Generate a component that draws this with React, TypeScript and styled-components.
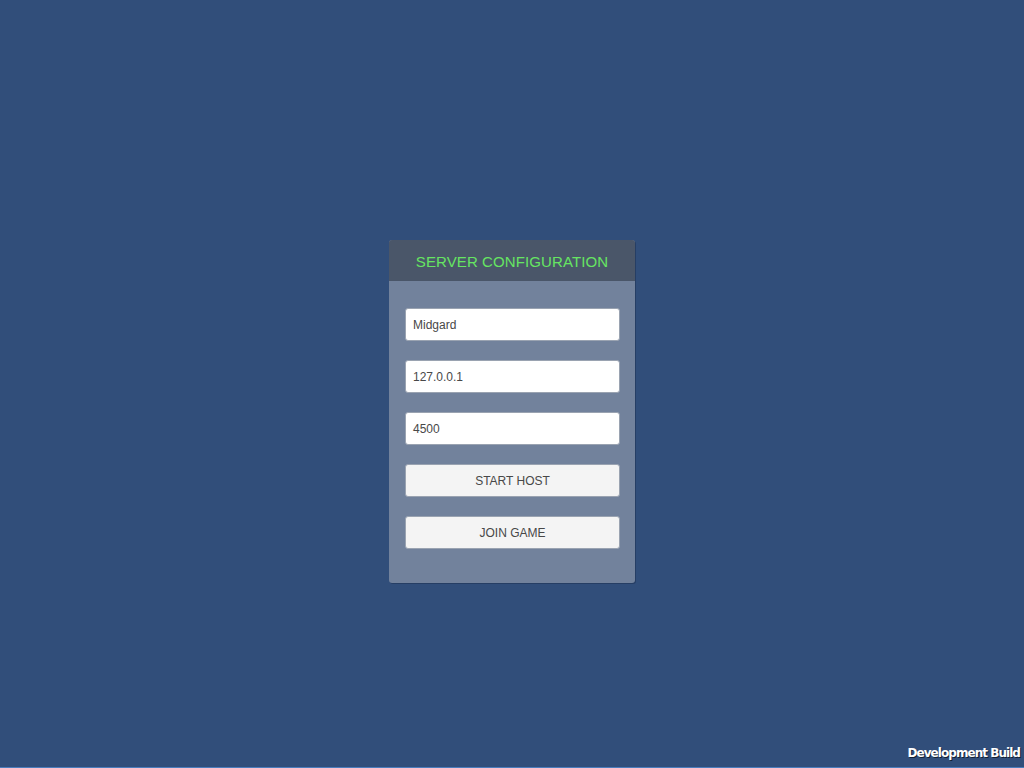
import React from 'react';
import styled, { createGlobalStyle } from 'styled-components';

const GlobalStyle = createGlobalStyle`
    html, body {
        margin: 0;
        padding: 0;
        background: #314e7a;
    }
    #root {
        height: 768px;
    }
`;

const Screen = styled.div`
    position: relative;
    width: 1024px;
    height: 768px;
    background: #314e7a;
    border-bottom: 1px solid #4a7cbc;
    box-sizing: border-box;
    display: flex;
    align-items: flex-start;
    justify-content: center;
    padding-top: 240px;
    font-family: "Liberation Sans", Arial, sans-serif;
`;

const Panel = styled.div`
    width: 246px;
    background: #72829c;
    border-radius: 3px;
    box-shadow: 1px 1px 0 rgba(20, 35, 60, 0.35);
    overflow: hidden;
`;

const Header = styled.div`
    height: 41px;
    padding-top: 1px;
    box-sizing: border-box;
    background: #4a5669;
    display: flex;
    align-items: center;
    justify-content: center;
    color: #66e562;
    font-size: 15px;
    letter-spacing: 0.1px;
`;

const Body = styled.div`
    display: flex;
    flex-direction: column;
    gap: 19px;
    padding: 27px 15px 34px 16px;
`;

const Field = styled.div`
    height: 33px;
    box-sizing: border-box;
    background: #ffffff;
    border: 1px solid #9aa3b1;
    border-radius: 3px;
    display: flex;
    align-items: center;
    padding: 1px 0 0 7px;
    color: #484848;
    font-size: 12px;
`;

const Button = styled.div`
    height: 33px;
    box-sizing: border-box;
    background: #f4f4f4;
    border: 1px solid #9aa3b1;
    border-radius: 3px;
    display: flex;
    align-items: center;
    justify-content: center;
    padding-top: 1px;
    color: #484848;
    font-size: 12px;
`;

const BuildLabel = styled.div`
    position: absolute;
    right: 4px;
    bottom: 7px;
    color: #ffffff;
    font-family: "DejaVu Sans", sans-serif;
    font-weight: bold;
    font-size: 12px;
    letter-spacing: -0.95px;
    text-shadow: 1px 1px 0 rgba(0, 0, 0, 0.6);
`;

const App: React.FC = () => {
    return (
        <>
            <GlobalStyle />
            <Screen>
                <Panel>
                    <Header>SERVER CONFIGURATION</Header>
                    <Body>
                        <Field>Midgard</Field>
                        <Field>127.0.0.1</Field>
                        <Field>4500</Field>
                        <Button>START HOST</Button>
                        <Button>JOIN GAME</Button>
                    </Body>
                </Panel>
                <BuildLabel>Development Build</BuildLabel>
            </Screen>
        </>
    );
};

export default App;
